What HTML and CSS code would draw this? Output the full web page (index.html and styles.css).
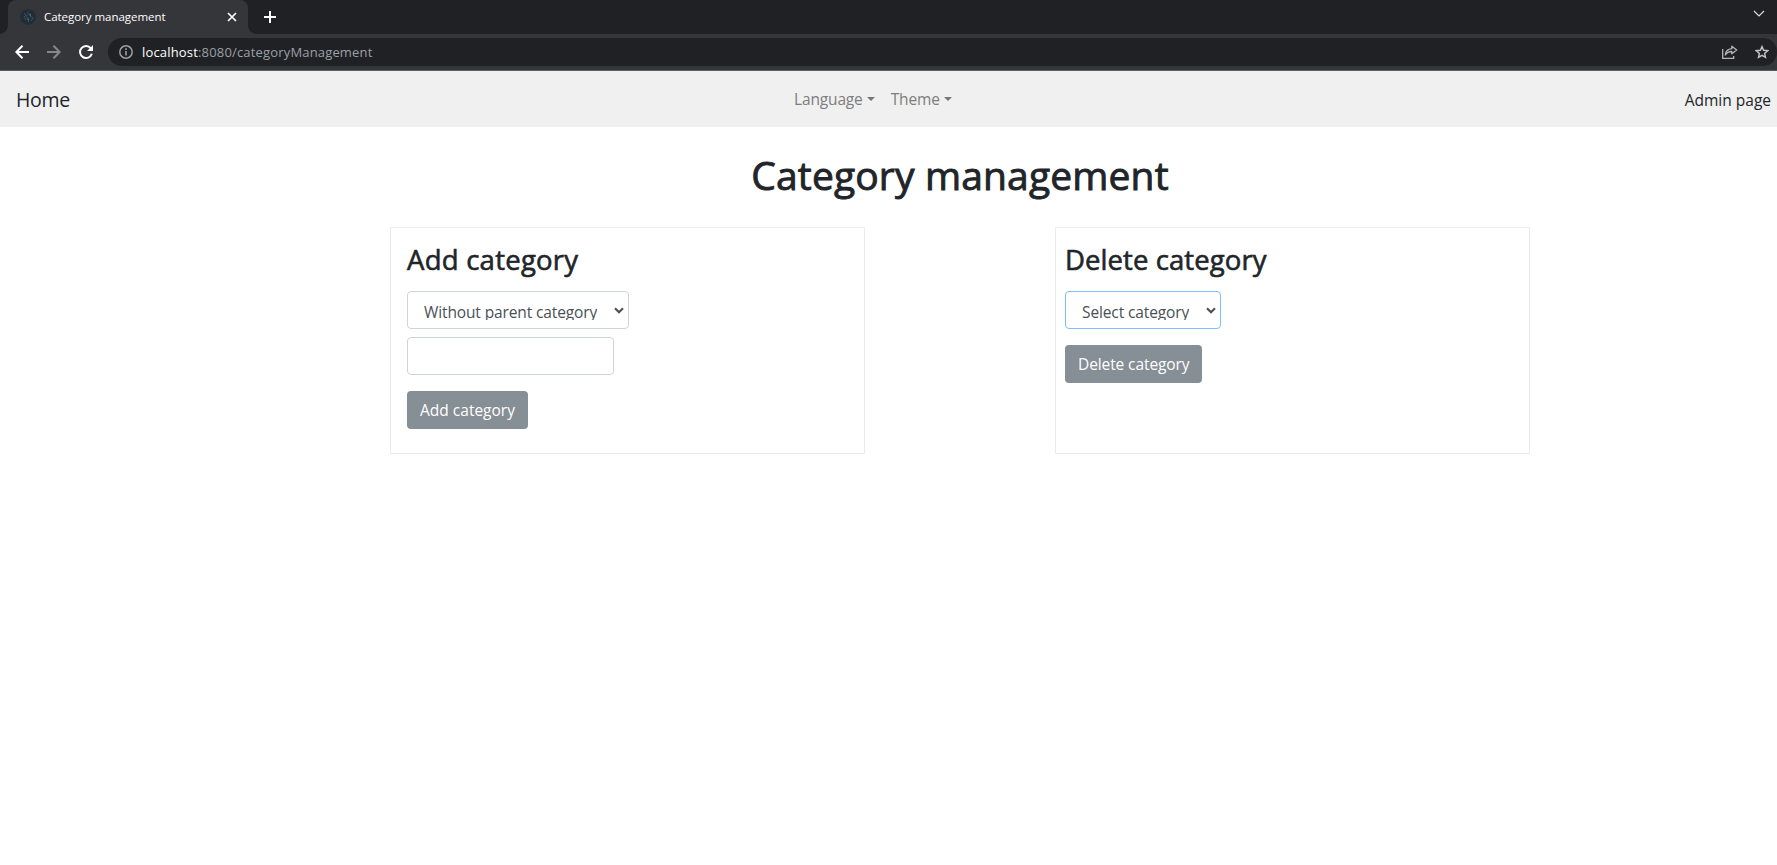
FILE: index.html
```html
<!DOCTYPE html>
<html lang="en">
<head>
<meta charset="utf-8">
<title>Category management</title>
<link rel="stylesheet" href="styles.css">
</head>
<body>
<header class="browser">
  <div class="tabstrip">
    <div class="tab">
      <svg class="favicon" width="16" height="16" viewBox="0 0 16 16"><circle cx="8" cy="8" r="7.8" fill="#202c36"/><path d="M4 4l2 2-2 2 2 3M8 2.500v3l-2 2 3 2-1 4M11 4l-1 3 3 2-2 3" fill="none" stroke="#345364" stroke-width="1"/><path d="M9 5l2 2M7 10l2 1" stroke="#6b6670"/></svg>
      <span class="tab-title">Category management</span>
      <svg class="tab-close" width="10" height="10" viewBox="0 0 10 10"><path d="M1 1l8 8M9 1L1 9" stroke="#fff" stroke-width="1.7"/></svg>
    </div>
    <svg class="new-tab" width="12" height="12" viewBox="0 0 12 12"><path d="M6 0v12M0 6h12" stroke="#fff" stroke-width="2"/></svg>
    <svg class="tab-search" width="12" height="8" viewBox="0 0 12 8"><path d="M1 1l5 5 5-5" fill="none" stroke="#dcdde0" stroke-width="1.2"/></svg>
  </div>
  <div class="toolbar">
    <svg width="14" height="14" viewBox="0 0 14 14"><path d="M14 7H1.500M7.500 .7L1.300 7l6.200 6.300" fill="none" stroke="#fff" stroke-width="2"/></svg>
    <svg width="14" height="14" viewBox="0 0 14 14"><path d="M0 7h12.500M6.500 .7L12.700 7l-6.200 6.300" fill="none" stroke="#86878a" stroke-width="2"/></svg>
    <svg width="14" height="14" viewBox="0 0 14 14"><path d="M11.800 3.300A6 6 0 1 0 12.800 8.800" fill="none" stroke="#fff" stroke-width="2"/><path d="M14 0v6H8z" fill="#fff"/></svg>
    <div class="omnibox">
      <svg width="14" height="14" viewBox="0 0 14 14"><circle cx="7" cy="7" r="6.200" fill="none" stroke="#9aa0a6" stroke-width="1.500"/><path d="M7 6v4.500M7 3.300v1.700" stroke="#9aa0a6" stroke-width="1.600"/></svg>
      <span class="url"><span class="host">localhost</span>:8080/categoryManagement</span>
      <svg class="share" width="16" height="14" viewBox="0 0 16 14"><path d="M.7 4v9.300h11V11" fill="none" stroke="#b4b5b8" stroke-width="1.300"/><path d="M3.300 10C3.600 6.300 6 4 9.800 3.700V1.200L14.700 5 9.800 8.800V6.500C6.800 6.500 4.800 7.500 3.300 10z" fill="none" stroke="#b4b5b8" stroke-width="1.300" stroke-linejoin="round"/></svg>
      <svg class="star" width="14" height="14" viewBox="0 0 14 14"><path d="M7 1.600l1.600 3.700 4.100.4-3.100 2.700.9 4L7 10.300l-3.500 2.100.9-4L1.300 5.700l4.100-.4z" fill="none" stroke="#c4c5c8" stroke-width="1.400"/></svg>
    </div>
  </div>
</header>
<nav class="navbar">
  <a class="brand">Home</a>
  <div class="menus">
    <a class="menu language">Language<i class="caret"></i></a>
    <a class="menu theme">Theme<i class="caret"></i></a>
  </div>
  <a class="admin">Admin page</a>
</nav>
<main>
  <h1>Category management</h1>
  <div class="panels">
    <section class="panel add">
      <h2>Add category</h2>
      <div class="select parent" role="combobox"><span>Without parent category</span><svg width="10" height="7" viewBox="0 0 10 7"><path d="M1 1.200l4 4 4-4" fill="none" stroke="#495057" stroke-width="2.100"/></svg></div>
      <input class="name" type="text" aria-label="Name">
      <button class="btn">Add category</button>
    </section>
    <section class="panel delete">
      <h2>Delete category</h2>
      <div class="select target" role="combobox"><span>Select category</span><svg width="10" height="7" viewBox="0 0 10 7"><path d="M1 1.200l4 4 4-4" fill="none" stroke="#495057" stroke-width="2.100"/></svg></div>
      <button class="btn">Delete category</button>
    </section>
  </div>
</main>
</body>
</html>
```
FILE: styles.css
```css
* { box-sizing: border-box; }
body { margin: 0; background: #fff; color: #212529; font-family: "Open Sans", "Noto Sans", sans-serif; font-size: 15.5px; white-space: nowrap; overflow: hidden; }
svg { display: block; flex: none; }
.browser { height: 71px; background: #35363a; border-bottom: 1px solid #5e5b63; }
.tabstrip { height: 34px; background: #202124; display: flex; align-items: center; padding-left: 8px; }
.tab { width: 240px; height: 34px; background: #35363a; border-radius: 8px 8px 0 0; display: flex; align-items: center; padding: 0 11px 0 12px; position: relative; }
.tab::before, .tab::after { content: ""; position: absolute; bottom: 0; width: 8px; height: 8px; }
.tab::before { left: -8px; background: radial-gradient(circle at 0 0, #202124 7.5px, #35363a 8px); }
.tab::after { right: -8px; background: radial-gradient(circle at 100% 0, #202124 7.5px, #35363a 8px); }
.tab-title { margin-left: 8px; padding-bottom: 1px; font-size: 11.5px; color: #fff; letter-spacing: -0.04px; }
.tab-close { margin-left: auto; }
.new-tab { margin-left: 16px; }
.tab-search { margin: -6px 12px 0 auto; }
.toolbar { height: 36px; display: flex; align-items: center; padding-left: 15px; gap: 18px; }
.omnibox { flex: 1; height: 28px; margin-left: -3px; border-radius: 14px; background: #202124; display: flex; align-items: center; padding: 0 8px 0 11px; }
.url { margin-left: 9px; font-size: 13px; letter-spacing: 0.17px; color: #9aa0a6; }
.host { color: #fff; }
.share { margin-left: auto; }
.star { margin-left: 17px; }
.navbar { height: 56px; background: #f0f0f0; display: flex; align-items: center; padding: 0 6px 0 16px; }
.brand { width: 778px; font-size: 19.5px; letter-spacing: -0.3px; }
.menus { display: flex; gap: 16px; color: #7d7d7d; letter-spacing: -0.15px; }
.menu { display: flex; align-items: center; }
.caret { border: 4.5px solid transparent; border-top-color: #777; border-bottom: 0; margin-left: 4px; }
.admin { margin-left: auto; padding-top: 1px; color: #212529; }
main { padding-left: 390px; }
h1 { width: 1140px; margin: 24px 0 0; font-size: 39px; line-height: 47px; font-weight: 400; letter-spacing: 0.15px; text-align: center; -webkit-text-stroke: 0.9px #212529; }
.panels { display: flex; gap: 190px; margin-top: 29px; }
.panel { width: 475px; height: 227px; border: 1px solid #e9ecef; padding: 15px 16px; display: flex; flex-direction: column; align-items: flex-start; }
.delete { padding-left: 9px; border-color: #ebebeb; }
h2 { margin: 0 0 14px; font-size: 27.5px; line-height: 34px; font-weight: 400; letter-spacing: 0.25px; -webkit-text-stroke: 0.6px #212529; }
.delete h2 { letter-spacing: 0.08px; }
.select { height: 38px; border: 1px solid #ced4da; border-radius: 4px; color: #495057; display: flex; justify-content: space-between; align-items: center; padding: 0 4px 0 16px; letter-spacing: -0.12px; }
.select span { height: 19px; line-height: 23px; overflow: hidden; }
.parent { width: 222px; }
.target { width: 156px; border-color: #80bdff; }
.name { width: 207px; height: 38px; margin-top: 8px; border: 1px solid #ced4da; border-radius: 4px; background: #fff; }
.btn { height: 38px; margin-top: 16px; padding: 0 13px; border: 0; border-radius: 4px; background: #868e96; color: #fff; font: inherit; }
.add .btn { width: 121px; }
.delete .btn { width: 137px; letter-spacing: -0.1px; }
```
